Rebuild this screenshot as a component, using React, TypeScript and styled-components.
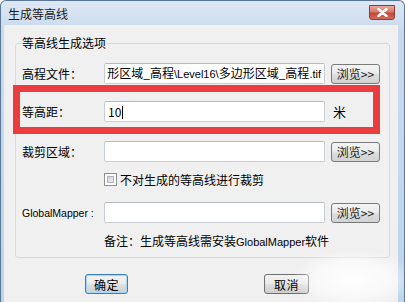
import React from 'react'
import styled, { createGlobalStyle } from 'styled-components'

const GlobalStyle = createGlobalStyle`
  html, body {
    margin: 0;
    padding: 0;
    background: #ffffff;
  }
  body {
    font-family: "Noto Sans CJK SC", "Noto Sans", sans-serif;
    font-size: 12px;
    color: #000;
  }
`

const Window = styled.div`
  box-sizing: border-box;
  width: 405px;
  height: 302px;
  display: flex;
  flex-direction: column;
  padding: 0 6px 0 3px;
  border: 1px solid #5a7896;
  border-bottom: none;
  border-radius: 6px 6px 0 0;
  background: linear-gradient(180deg, #dde8f4 0%, #c9daee 10%, #bfd4eb 100%);
  overflow: hidden;
  position: relative;
`

const TitleBar = styled.div`
  height: 24px;
  display: flex;
  align-items: flex-start;
  justify-content: space-between;
  padding-left: 4px;
`

const Title = styled.span`
  line-height: 25px;
  font-size: 12px;
  color: #1a1a1a;
`

const CloseButton = styled.div`
  box-sizing: border-box;
  width: 26px;
  height: 15px;
  margin: 4px 3px 0 0;
  border: 1px solid #8d3d33;
  border-radius: 0 0 3px 3px;
  background: linear-gradient(180deg, #e8a99b 0%, #d7796a 45%, #c4473a 55%, #d2695a 100%);
  display: flex;
  align-items: center;
  justify-content: center;
`

const Client = styled.div`
  flex: 1;
  background: #f0f0f0;
  display: flex;
  flex-direction: column;
`

const Group = styled.fieldset`
  margin: 10px 8px 0 11px;
  padding: 0 6px 7px 6px;
  border: 1px solid #d5dadf;
  border-radius: 3px;
  min-inline-size: 0;
`

const Legend = styled.legend`
  padding: 0 1px;
  margin-left: -1px;
  line-height: 16px;
  font-size: 12px;
`

const Row = styled.div<{ $top: number }>`
  display: grid;
  grid-template-columns: 76px 221px auto;
  column-gap: 6px;
  align-items: center;
  margin-top: ${(p) => p.$top}px;
`

const Highlight = styled.div`
  box-sizing: border-box;
  width: 367px;
  margin: 1px 0 0 -9px;
  padding: 9px 0 5px 2px;
  border: 7px solid #ea3d3f;
`

const Label = styled.span<{ $latin?: boolean }>`
  font-family: ${(p) =>
    p.$latin ? '"Liberation Sans", Arial, sans-serif' : '"Noto Sans CJK SC", sans-serif'};
  font-size: ${(p) => (p.$latin ? '10.5px' : '12px')};
  white-space: nowrap;
`

const Input = styled.div`
  box-sizing: border-box;
  height: 21px;
  border: 1px solid #c9ced4;
  border-top-color: #b5bac0;
  border-radius: 2px;
  background: #fff;
  display: flex;
  align-items: center;
  justify-content: flex-end;
  padding: 0 3px;
  overflow: hidden;
  white-space: nowrap;
`

const InputText = styled.span`
  font-size: 12px;
  line-height: 19px;
  flex-shrink: 0;
`

const ValueInput = styled(Input)`
  justify-content: flex-start;
`

const Caret = styled.span`
  display: inline-block;
  width: 1px;
  height: 13px;
  margin-left: 1px;
  background: #000;
  vertical-align: -2px;
`

const BrowseButton = styled.div`
  box-sizing: border-box;
  width: 49px;
  height: 20px;
  border: 1px solid #7a7a7a;
  border-radius: 3px;
  background: linear-gradient(180deg, #f4f4f4 0%, #ececec 45%, #dcdcdc 55%, #d2d2d2 100%);
  display: flex;
  align-items: center;
  justify-content: center;
  font-size: 12px;
  color: #222;
`

const Unit = styled.span`
  font-size: 13px;
  padding-left: 2px;
`

const CheckRow = styled.label`
  display: flex;
  align-items: center;
  gap: 3px;
  height: 14px;
  margin: 10px 0 0 82px;
  font-size: 12px;
`

const CheckBox = styled.span`
  box-sizing: border-box;
  width: 13px;
  height: 13px;
  border: 1px solid #8e8f8f;
  background: #fff;
  padding: 2px;
  display: block;
  &::after {
    content: '';
    display: block;
    width: 100%;
    height: 100%;
    background: linear-gradient(135deg, #cbcfd5 0%, #eef0f2 100%);
    border: 1px solid #b0b4b9;
    box-sizing: border-box;
  }
`

const Note = styled.div`
  margin: 10px 0 0 82px;
  line-height: 16px;
  font-size: 12px;
  white-space: nowrap;
`

const Latin = styled.span`
  font-family: "Liberation Sans", Arial, sans-serif;
  font-size: 11px;
`

const Footer = styled.div`
  display: flex;
  gap: 136px;
  padding-left: 81px;
  margin-top: 16px;
`

const DialogButton = styled.div<{ $default?: boolean }>`
  box-sizing: border-box;
  width: ${(p) => (p.$default ? '43px' : '45px')};
  height: 20px;
  border: 1px solid ${(p) => (p.$default ? '#3c7fb1' : '#707070')};
  border-radius: 3px;
  box-shadow: ${(p) => (p.$default ? 'inset 0 0 0 1px #a6d8f6' : 'none')};
  background: linear-gradient(180deg, #f2f2f2 0%, #ebebeb 45%, #dddddd 55%, #cfcfcf 100%);
  display: flex;
  align-items: center;
  justify-content: center;
  font-size: 12px;
  letter-spacing: 0.5px;
`

const Watermark = styled.div`
  position: absolute;
  left: 282px;
  top: 238px;
  width: 130px;
  height: 70px;
  pointer-events: none;
  background: radial-gradient(ellipse 60px 30px at 70px 40px, rgba(255, 255, 255, 0.95) 0%, rgba(255, 255, 255, 0.6) 60%, rgba(255, 255, 255, 0) 100%);
`

const CloseIcon = () => (
  <svg width="11" height="9" viewBox="0 0 11 9">
    <path d="M1.5 1 L9.5 8 M9.5 1 L1.5 8" stroke="#fff" strokeWidth="2.4" strokeLinecap="round" />
  </svg>
)

export default function App() {
  return (
    <>
      <GlobalStyle />
      <Window>
        <TitleBar>
          <Title>生成等高线</Title>
          <CloseButton>
            <CloseIcon />
          </CloseButton>
        </TitleBar>
        <Client>
          <Group>
            <Legend>等高线生成选项</Legend>
            <Row $top={12}>
              <Label>高程文件：</Label>
              <Input>
                <InputText>
                  形区域_高程<Latin>\Level16\</Latin>多边形区域_高程<Latin>.tif</Latin>
                </InputText>
              </Input>
              <BrowseButton>浏览&gt;&gt;</BrowseButton>
            </Row>
            <Highlight>
              <Row $top={0}>
                <Label>等高距：</Label>
                <ValueInput>
                  <InputText>
                    10
                    <Caret />
                  </InputText>
                </ValueInput>
                <Unit>米</Unit>
              </Row>
            </Highlight>
            <Row $top={7}>
              <Label>裁剪区域：</Label>
              <Input />
              <BrowseButton>浏览&gt;&gt;</BrowseButton>
            </Row>
            <CheckRow>
              <CheckBox />
              不对生成的等高线进行裁剪
            </CheckRow>
            <Row $top={16}>
              <Label $latin>GlobalMapper :</Label>
              <Input />
              <BrowseButton>浏览&gt;&gt;</BrowseButton>
            </Row>
            <Note>
              备注：生成等高线需安装<Latin>GlobalMapper</Latin>软件
            </Note>
          </Group>
          <Footer>
            <DialogButton $default>确定</DialogButton>
            <DialogButton>取消</DialogButton>
          </Footer>
        </Client>
        <Watermark />
      </Window>
    </>
  )
}
